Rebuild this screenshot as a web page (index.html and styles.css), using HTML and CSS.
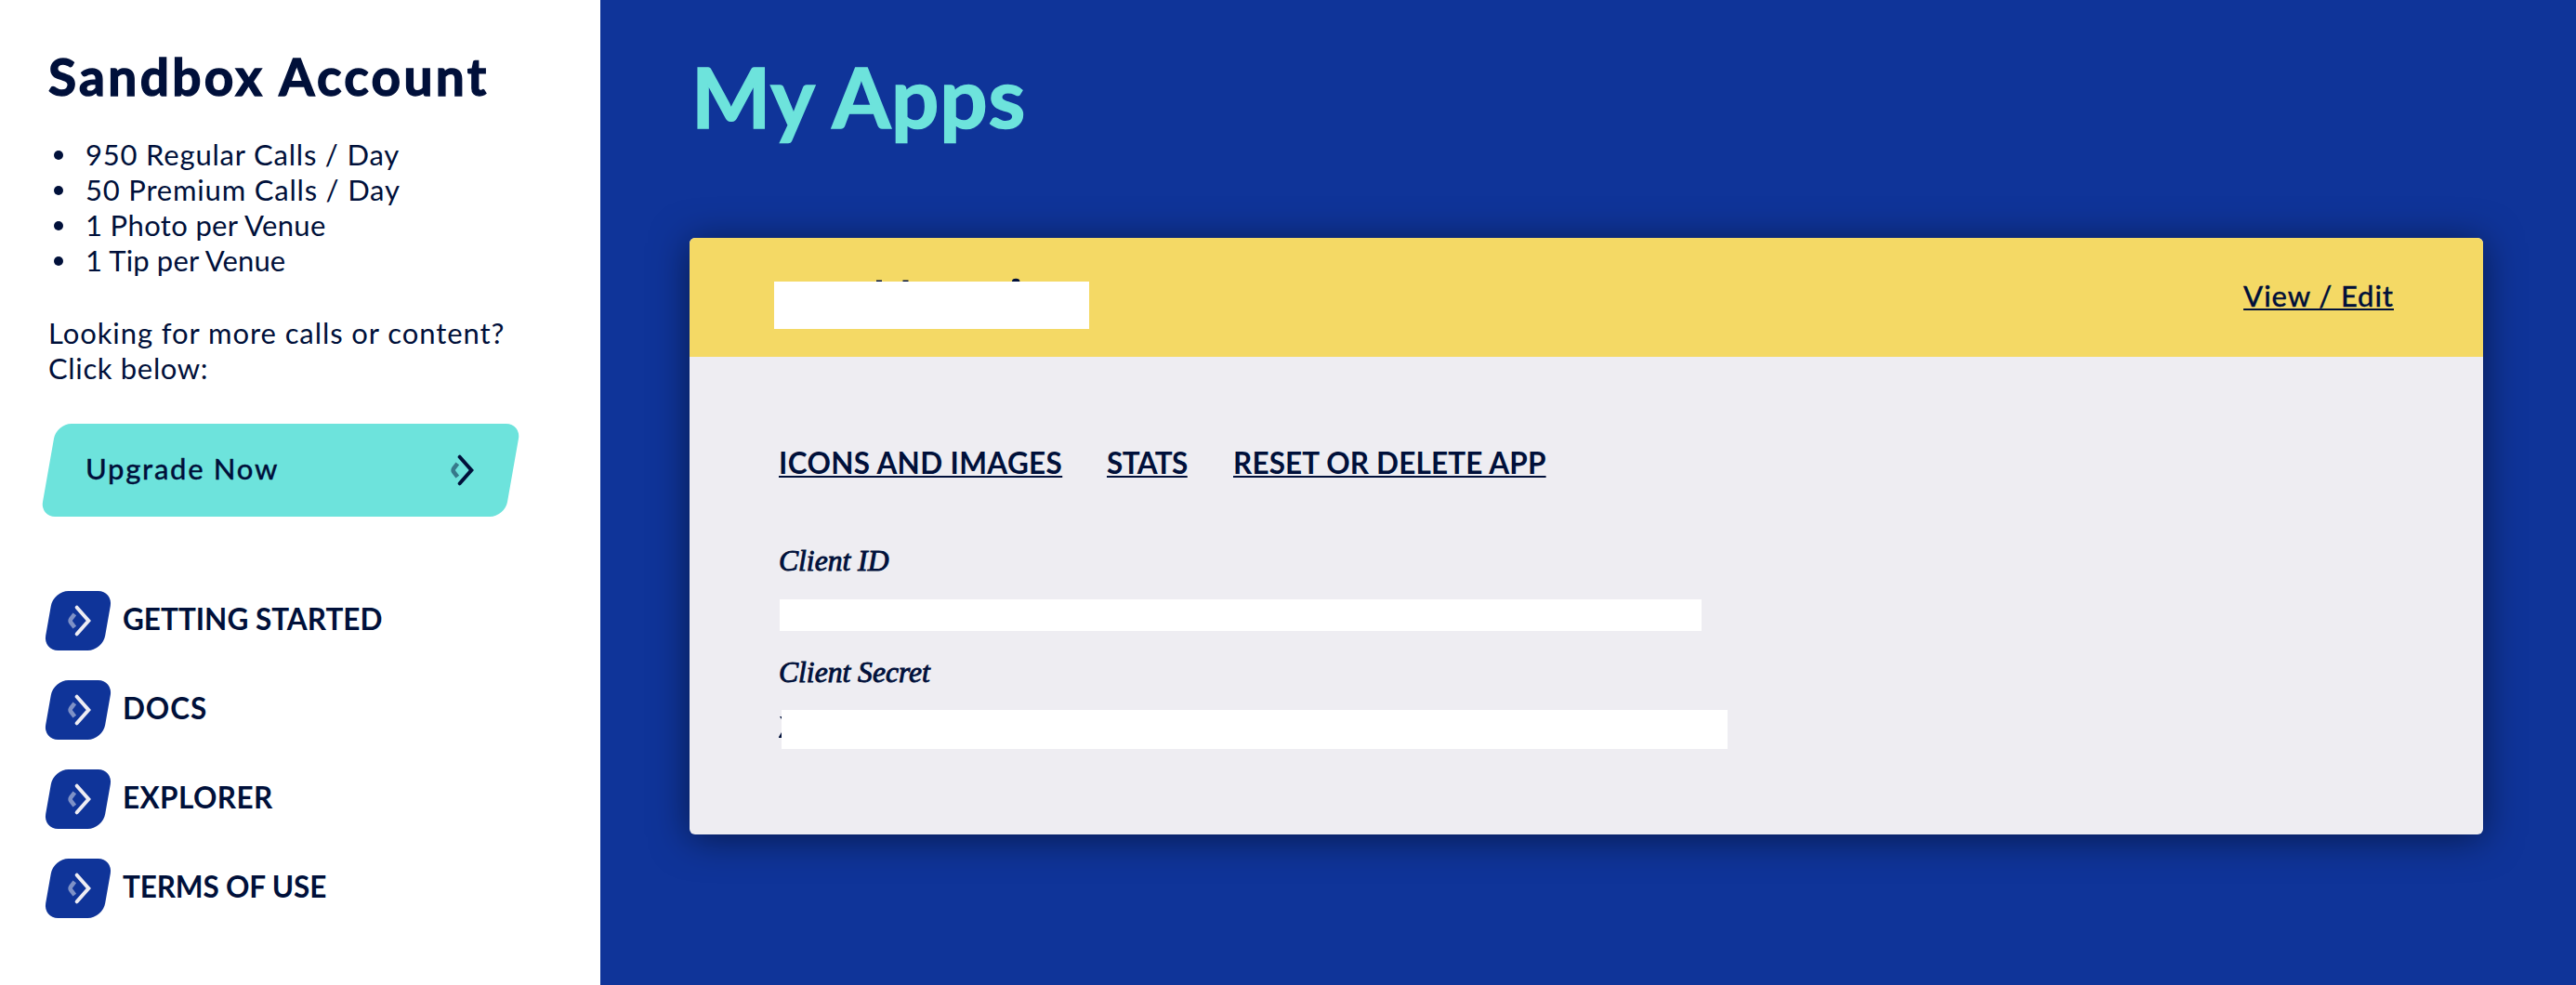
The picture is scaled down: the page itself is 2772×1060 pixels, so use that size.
FILE: index.html
```html
<!DOCTYPE html>
<html lang="en">
<head>
<meta charset="utf-8">
<title>My Apps</title>
<link rel="stylesheet" href="styles.css">
</head>
<body>
<svg class="defs" aria-hidden="true">
  <symbol id="chevron" viewBox="0 0 28 36">
    <path d="M10.300 10.800 L6.300 16 Q5 18 6.300 20 L10.300 25.200" fill="none" stroke="currentColor" stroke-width="4.600" opacity=".5"/>
    <path d="M12.700 3.700 L25.300 18 L12.700 32.300" fill="none" stroke="currentColor" stroke-width="4" stroke-linecap="round"/>
  </symbol>
</svg>
<div class="page">
  <aside class="sidebar">
    <h2 class="plan">Sandbox Account</h2>
    <ul class="limits">
      <li class="ls-1">950 Regular Calls / Day</li>
      <li class="ls-1">50 Premium Calls / Day</li>
      <li class="ls-2">1 Photo per Venue</li>
      <li class="ls-3">1 Tip per Venue</li>
    </ul>
    <p class="pitch">Looking for more calls or content?<br><span class="click">Click below:</span></p>
    <a class="upgrade"><span>Upgrade Now</span><svg class="chev"><use href="#chevron"/></svg></a>
    <nav class="links">
      <a class="link"><span class="tile"><svg class="chev"><use href="#chevron"/></svg></span><span>GETTING STARTED</span></a>
      <a class="link"><span class="tile"><svg class="chev"><use href="#chevron"/></svg></span><span class="docs">DOCS</span></a>
      <a class="link"><span class="tile"><svg class="chev"><use href="#chevron"/></svg></span><span class="explorer">EXPLORER</span></a>
      <a class="link"><span class="tile"><svg class="chev"><use href="#chevron"/></svg></span><span class="terms">TERMS OF USE</span></a>
    </nav>
  </aside>
  <main class="content">
    <h1 class="title">My Apps</h1>
    <section class="card">
      <header class="card-head">
        <div class="name-mask">
          <svg class="name-tops" viewBox="0 0 339 4"><path d="M110 2.400h6v1.600h-6zM138.500 2.400h6v1.600h-6zM256 4a4.200 3.200 0 0 1 8.400 0z" fill="currentColor"/></svg>
        </div>
        <a class="edit">View / Edit</a>
      </header>
      <div class="card-body">
        <div class="tabs">
          <a class="tab icons">ICONS AND IMAGES</a>
          <a class="tab stats">STATS</a>
          <a class="tab reset">RESET OR DELETE APP</a>
        </div>
        <div class="label">Client ID</div>
        <div class="mask mask-id"></div>
        <div class="label label-secret">Client Secret</div>
        <div class="mask mask-secret">
          <svg class="secret-edge" viewBox="0 0 3 42"><path d="M1 7h2v3zM0 30v-1l3-5v6z" fill="currentColor"/></svg>
        </div>
      </div>
    </section>
  </main>
</div>
</body>
</html>
```
FILE: styles.css
```css
* { box-sizing: border-box; }
body {
  margin: 0;
  color: #00103a;
  font-family: Lato, "Open Sans", sans-serif;
  font-size: 31px;
  line-height: 38px;
}
.defs { display: block; width: 0; height: 0; }
.page { display: flex; height: 1060px; overflow: hidden; }

.sidebar { width: 646px; flex: none; padding: 50px 52px 0; background: #fff; }
.plan { margin: 0; font-size: 55px; line-height: 64px; font-weight: 700; letter-spacing: 3.3px; white-space: nowrap; -webkit-text-stroke: 1.4px currentColor; }
.limits { margin: 33px 0 0; padding: 0; list-style: none; }
.limits li { display: flex; align-items: center; }
.limits li::before { content: ""; width: 10px; height: 10px; margin: 1px 24px 0 6px; border-radius: 50%; background: currentColor; }
.ls-1 { letter-spacing: .8px; }
.ls-2 { letter-spacing: .35px; }
.ls-3 { letter-spacing: .15px; }
.pitch { margin: 40px 0 0; letter-spacing: .92px; white-space: nowrap; }
.click { letter-spacing: .65px; }

.upgrade {
  display: flex;
  justify-content: space-between;
  width: 500px;
  height: 100px;
  margin-top: 41px;
  padding: 0 40px;
  position: relative;
  z-index: 0;
  line-height: 97px;
  font-weight: 500;
  letter-spacing: 1.7px;
}
.upgrade span, .edit { -webkit-text-stroke: .3px currentColor; }
.upgrade::before, .tile::before {
  content: "";
  position: absolute;
  inset: 0;
  z-index: -1;
  border-radius: 16px;
  transform: skewX(-10deg);
}
.upgrade::before { background: #6de3dc; }
.chev { width: 28px; height: 36px; flex: none; }
.upgrade .chev { margin: 32px 2px 0 0; }

.links { display: flex; flex-direction: column; gap: 32px; margin-top: 80px; }
.link { display: flex; gap: 16px; height: 64px; font-size: 31.5px; line-height: 61px; font-weight: 700; }
.tile { position: relative; z-index: 0; width: 64px; height: 64px; color: #eeedf3; }
.tile::before { background: #0f3499; }
.tile .chev { display: block; margin: 14px 0 0 18px; }
.docs { letter-spacing: .9px; }
.explorer { letter-spacing: .4px; }
.terms { letter-spacing: -.15px; }

.content { flex: 1; padding: 49px 100px 0 97px; background: #0f3499; }
.title { margin: 0; padding-left: 1px; color: #6de3dc; font-size: 90.5px; line-height: 108px; font-weight: 700; letter-spacing: .8px; -webkit-text-stroke: 1.6px currentColor; }
.card {
  height: 642px;
  margin: 99px 0 0 -1px;
  overflow: hidden;
  border-radius: 6px;
  background: #eeedf2;
  box-shadow: 0 4px 40px rgba(0, 0, 0, .5);
}
.card-head { display: flex; justify-content: space-between; height: 128px; padding: 0 96px 0 91px; background: #f4d965; }
.name-mask { position: relative; width: 339px; height: 51px; margin-top: 47px; background: #fff; }
.name-tops { position: absolute; left: 0; top: -4px; width: 339px; height: 4px; }
.edit, .tab {
  text-decoration: underline 2px;
  text-decoration-skip-ink: none;
  text-underline-offset: 2px;
}
.edit { line-height: 125px; font-weight: 500; letter-spacing: .9px; }
.card-body { padding: 95px 96px 0; }
.tabs { display: flex; gap: 48px; font-size: 31.5px; font-weight: 700; white-space: nowrap; }
.icons { width: 305px; letter-spacing: .35px; }
.stats { width: 88px; letter-spacing: -.6px; }
.reset { letter-spacing: .15px; }
.label {
  margin-top: 68px;
  font-family: "Liberation Serif", serif;
  font-size: 31.6px;
  font-style: italic;
  -webkit-text-stroke: .9px currentColor;
}
.mask { background: #fff; }
.mask-id { width: 992px; height: 34px; margin: 22px 0 0 1px; }
.label-secret { margin-top: 26px; }
.mask-secret { position: relative; width: 1018px; height: 42px; margin: 21px 0 0 3px; }
.secret-edge { position: absolute; left: -3px; top: 0; width: 3px; height: 42px; }
```
